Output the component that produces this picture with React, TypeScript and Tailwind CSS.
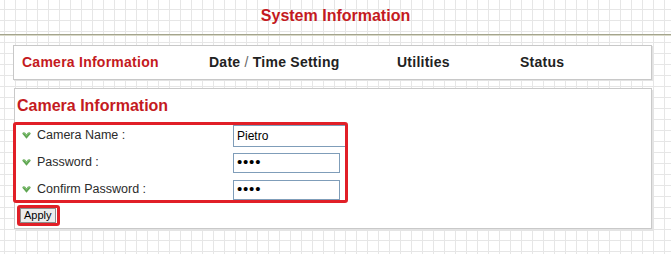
import React from "react";

function Mark() {
  return (
    <svg width="9" height="7" viewBox="0 0 9 7" className="shrink-0">
      <path d="M0.3 1.8 Q0.3 0.2 1.8 0.2 Q3.3 0.2 4.5 2.4 Q5.7 0.2 7.2 0.2 Q8.7 0.2 8.7 1.8 L4.5 6.8 Z" fill="#5fa652" />
      <path d="M1.2 1.6 Q1.6 0.9 2.4 1.2 L4.5 3.6 L6.6 1.2 Q7.4 0.9 7.8 1.6" fill="none" stroke="#9fd290" strokeWidth="0.6" />
    </svg>
  );
}

function Row({ label, children, h }: { label: string; children: React.ReactNode; h: string }) {
  return (
    <div className={`flex items-center ${h}`}>
      <div className="flex items-center w-[218px] pl-[7px] gap-[6px]">
        <Mark />
        <span className="text-[12.5px] text-[#2b2b2b]">{label}</span>
      </div>
      {children}
    </div>
  );
}

export default function App() {
  return (
    <div
      className="w-[671px] h-[254px] overflow-hidden bg-white font-['Liberation_Sans',Arial,sans-serif] bg-[linear-gradient(to_right,#e6e6e6_1px,transparent_1px),linear-gradient(to_bottom,#e6e6e6_1px,transparent_1px)] bg-[size:11px_11px] bg-[position:4px_9px]"
    >
      <div className="h-[34px] pt-[4px] text-center text-[16px] font-bold text-[#c41a21]">System Information</div>
      <div className="h-[1px] bg-[#a4a48c]" />
      <div className="h-[1px] bg-[#d8d8c8]" />
      <div className="ml-[13px] mt-[9px] w-[639px] h-[35px] border border-[#c8c8c8] bg-white shadow-[1px_1px_0_#e2e2e2] flex items-center pl-[8px] text-[14px] font-bold tracking-[0.25px] text-[#222]">
        <div className="w-[187px] text-[#c41a21]">Camera Information</div>
        <div className="w-[188px]">
          Date <span className="font-normal text-[#666]">/</span> Time Setting
        </div>
        <div className="w-[123px]">Utilities</div>
        <div>Status</div>
      </div>
      <div className="relative ml-[14px] mt-[8px] w-[638px] h-[141px] border border-[#c9c9c9] bg-white shadow-[2px_2px_0_#e4e4e4] pt-[8px]">
        <div className="ml-[2px] text-[16px] font-bold text-[#c41a21] leading-[18px]">Camera Information</div>
        <div className="relative mt-[7px] w-[333px]">
          <Row label="Camera Name :" h="h-[27px]">
            <input
              readOnly
              defaultValue="Pietro"
              className="w-[113px] h-[22px] mt-[1px] border border-[#7f9db9] bg-white pl-[3px] text-[12px] text-black outline-none font-['Liberation_Sans',Arial,sans-serif]"
            />
          </Row>
          <Row label="Password :" h="h-[27px]">
            <input
              readOnly
              type="password"
              defaultValue="1234"
              className="w-[107px] h-[20px] border border-[#7f9db9] bg-white pl-[3px] text-[15px] tracking-[0.8px] text-black outline-none font-['Liberation_Sans',Arial,sans-serif]"
            />
          </Row>
          <Row label="Confirm Password :" h="h-[27px]">
            <input
              readOnly
              type="password"
              defaultValue="1234"
              className="w-[107px] h-[20px] border border-[#7f9db9] bg-white pl-[3px] text-[15px] tracking-[0.8px] text-black outline-none font-['Liberation_Sans',Arial,sans-serif]"
            />
          </Row>
          <div className="absolute -left-[2px] top-0 right-0 bottom-0 border-[3px] border-[#e11f27] rounded-[3px] pointer-events-none" />
        </div>
        <div className="relative ml-[5px] mt-[5px] w-fit flex">
          <button className="block h-[15px] px-[3px] border border-[#8c8c8c] bg-[#ececec] text-[11px] leading-[13px] text-black font-['Liberation_Sans',Arial,sans-serif]">
            Apply
          </button>
          <div className="absolute -left-[3px] -right-[4px] -top-[3px] -bottom-[3px] border-[3px] border-[#e11f27] rounded-[3px] pointer-events-none" />
        </div>
      </div>
    </div>
  );
}
